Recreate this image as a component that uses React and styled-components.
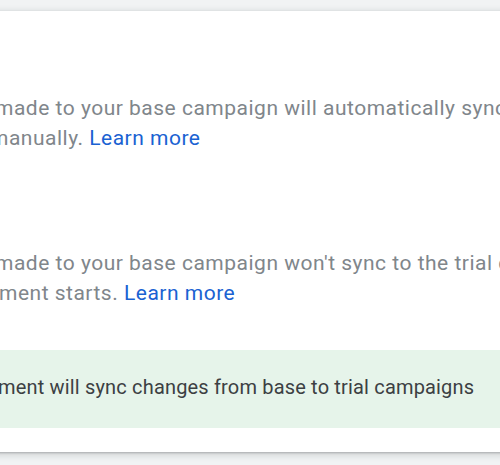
import React from "react";
import styled, { createGlobalStyle } from "styled-components";

const Global = createGlobalStyle`
  html, body { margin: 0; padding: 0; }
  body {
    background: #f1f3f4;
    overflow: hidden;
    font-family: Roboto, "Liberation Sans", Arial, sans-serif;
  }
`;

const Page = styled.div`
  width: 500px;
  height: 465px;
  padding-top: 11px;
  box-sizing: border-box;
  overflow: hidden;
`;

const Card = styled.div`
  margin: 0 -40px;
  height: 441px;
  background: #fff;
  box-shadow: 0 1px 2px rgba(60, 64, 67, 0.3), 0 2px 6px 2px rgba(60, 64, 67, 0.15);
  display: flex;
  flex-direction: column;
  padding-top: 82px;
  box-sizing: border-box;
`;

const Option = styled.div`
  margin-bottom: ${(p) => p.$gap}px;
  padding-left: 40px;
`;

const Line = styled.div`
  white-space: nowrap;
  font-size: 21px;
  letter-spacing: 0.5px;
  line-height: 30px;
  color: #80868b;
  margin-left: ${(p) => p.$shift}px;
`;

const BannerLine = styled.div`
  white-space: nowrap;
  font-size: 20px;
  letter-spacing: 0.17px;
  line-height: 30px;
  color: #3c4043;
  margin-left: ${(p) => p.$shift}px;
`;

const Link = styled.a`
  color: #1a62d2;
  text-decoration: none;
`;

const Banner = styled.div`
  background: #e6f4ea;
  padding: 22px 0 26px 40px;
`;

export default function App() {
  return (
    <>
      <Global />
      <Page>
        <Card>
          <Option $gap={95}>
            <Line $shift={-5}>made to your base campaign will automatically sync to your trial</Line>
            <Line $shift={-10}>manually. <Link href="#">Learn more</Link></Line>
          </Option>
          <Option $gap={42}>
            <Line $shift={-5}>made to your base campaign won't sync to the trial campaign</Line>
            <Line $shift={-1}>ment starts. <Link href="#">Learn more</Link></Line>
          </Option>
          <Banner>
            <BannerLine $shift={-2}>ment will sync changes from base to trial campaigns</BannerLine>
          </Banner>
        </Card>
      </Page>
    </>
  );
}
